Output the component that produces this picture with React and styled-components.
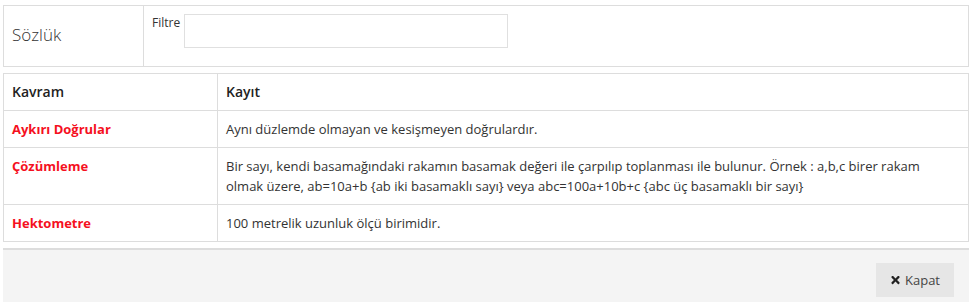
import React, { useState } from "react";
import styled, { createGlobalStyle } from "styled-components";
import { FaTimes } from "react-icons/fa";

const GlobalStyle = createGlobalStyle`
  body {
    margin: 0;
    background: #fff;
    font-family: "Open Sans", "Noto Sans", sans-serif;
    color: #333;
  }
`;

const Page = styled.div`
  width: 966px;
  padding: 5px 0 0 3px;
`;

const HeaderBox = styled.div`
  display: flex;
  height: 60px;
  border: 1px solid #ddd;
`;

const TitleCell = styled.div`
  width: 140px;
  border-right: 1px solid #ddd;
  display: flex;
  align-items: center;
  padding: 0 0 3px 8px;
  box-sizing: border-box;
  font-size: 17px;
  font-weight: 300;
  color: #333;
`;

const FilterCell = styled.div`
  display: flex;
  align-items: flex-start;
  padding: 8px 0 0 8px;
  gap: 4px;
`;

const FilterLabel = styled.label`
  font-size: 12px;
  line-height: 18px;
  color: #333;
`;

const FilterInput = styled.input`
  width: 324px;
  height: 34px;
  box-sizing: border-box;
  border: 1px solid #e0e0e0;
  outline: none;
  font-family: inherit;
  font-size: 12px;
  padding: 0 8px;
`;

const Table = styled.table`
  width: 966px;
  margin-top: 6px;
  border-collapse: collapse;
  border: 1px solid #ddd;
`;

const Th = styled.th`
  text-align: left;
  font-weight: 600;
  font-size: 14px;
  color: #222;
  padding: 8px 8px;
  line-height: 20px;
  border: 1px solid #ddd;
  width: ${(p) => p.$width || "auto"};
`;

const Td = styled.td`
  padding: 8px 8px;
  line-height: 20px;
  border: 1px solid #ddd;
  vertical-align: top;
  color: ${(p) => (p.$term ? "#f5101e" : "#333")};
  font-weight: ${(p) => (p.$term ? 700 : 400)};
  font-size: 13px;
`;

const Footer = styled.div`
  margin-top: 6px;
  border-top: 2px solid #ddd;
  background: #f4f4f4;
  height: 54px;
  display: flex;
  justify-content: flex-end;
  align-items: flex-start;
  padding: 13px 15px 0 0;
  box-sizing: border-box;
`;

const CloseButton = styled.button`
  width: 78px;
  height: 34px;
  border: none;
  background: #e6e6e6;
  color: #444;
  font-family: inherit;
  font-size: 13px;
  display: flex;
  align-items: center;
  justify-content: center;
  gap: 4px;
  cursor: pointer;
  svg {
    width: 11px;
    height: 12px;
    color: #222;
  }
`;

const rows = [
  {
    term: "Aykırı Doğrular",
    text: "Aynı düzlemde olmayan ve kesişmeyen doğrulardır.",
  },
  {
    term: "Çözümleme",
    text: "Bir sayı, kendi basamağındaki rakamın basamak değeri ile çarpılıp toplanması ile bulunur. Örnek : a,b,c birer rakam olmak üzere, ab=10a+b {ab iki basamaklı sayı} veya abc=100a+10b+c {abc üç basamaklı bir sayı}",
  },
  {
    term: "Hektometre",
    text: "100 metrelik uzunluk ölçü birimidir.",
  },
];

function App() {
  const [filter, setFilter] = useState("");

  const filtered = rows.filter((r) =>
    r.term.toLocaleLowerCase("tr").includes(filter.toLocaleLowerCase("tr"))
  );

  return (
    <Page>
      <GlobalStyle />
      <HeaderBox>
        <TitleCell>Sözlük</TitleCell>
        <FilterCell>
          <FilterLabel>Filtre</FilterLabel>
          <FilterInput
            type="text"
            value={filter}
            onChange={(e) => setFilter(e.target.value)}
          />
        </FilterCell>
      </HeaderBox>
      <Table>
        <thead>
          <tr>
            <Th $width="197px">Kavram</Th>
            <Th>Kayıt</Th>
          </tr>
        </thead>
        <tbody>
          {filtered.map((r) => (
            <tr key={r.term}>
              <Td $term>{r.term}</Td>
              <Td>{r.text}</Td>
            </tr>
          ))}
        </tbody>
      </Table>
      <Footer>
        <CloseButton>
          <FaTimes />
          Kapat
        </CloseButton>
      </Footer>
    </Page>
  );
}

export default App;
